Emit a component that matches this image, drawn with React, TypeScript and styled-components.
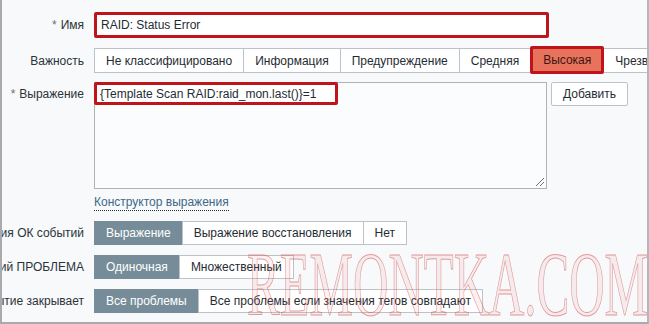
import styled, { createGlobalStyle } from "styled-components";

const GlobalStyle = createGlobalStyle`
  body {
    margin: 0;
    background: #ffffff;
    font-family: "Liberation Sans", Arial, sans-serif;
  }
`;

const Frame = styled.div`
  position: relative;
  width: 649px;
  height: 324px;
  box-sizing: border-box;
  border-left: 2px solid #a7abae;
  border-right: 2px solid #b3b7ba;
  border-bottom: 2px solid #a7abae;
  background: #f8f9fb;
  overflow: hidden;
  padding-top: 12px;
  font-size: 12px;
  color: #1f2c33;
`;

const Row = styled.div<{ $top?: number; $align?: string }>`
  display: flex;
  align-items: ${(p) => p.$align ?? "center"};
  margin-top: ${(p) => p.$top ?? 0}px;
`;

const Label = styled.div<{ $pad?: number }>`
  width: 82px;
  flex-shrink: 0;
  display: flex;
  justify-content: flex-end;
  white-space: nowrap;
  padding-top: ${(p) => p.$pad ?? 0}px;
  margin-right: 10px;
  color: #2b3338;
`;

const Star = styled.span`
  color: #6b6f72;
  margin-right: 4px;
`;

const NameInput = styled.div`
  width: 455px;
  height: 26px;
  box-sizing: border-box;
  border: 3px solid #bf141c;
  border-radius: 2px;
  background: #ffffff;
  padding: 0 4px;
  display: flex;
  align-items: center;
`;

const Group = styled.div`
  display: flex;
`;

const Seg = styled.div<{ $on?: boolean; $pad?: number }>`
  height: 24px;
  box-sizing: border-box;
  display: flex;
  align-items: center;
  padding: 0 ${(p) => p.$pad ?? 11}px;
  border: 1px solid ${(p) => (p.$on ? "#768d99" : "#bcc3c8")};
  margin-left: -1px;
  background: ${(p) => (p.$on ? "#768d99" : "#ffffff")};
  color: ${(p) => (p.$on ? "#ffffff" : "#1f2c33")};
  white-space: nowrap;
  &:first-child {
    margin-left: 0;
  }
`;

const Severity = styled(Seg)<{ $hot?: boolean }>`
  height: 25px;
  ${(p) =>
    p.$hot &&
    `
    background: #e8735c;
    color: #3b1510;
    border: 3px solid #bf141c;
    border-radius: 2px;
    height: 28px;
    margin: -2px 0 -1px -1px;
    position: relative;
  `}
`;

const ExprWrap = styled.div`
  display: flex;
  align-items: flex-start;
  gap: 4px;
`;

const TextArea = styled.div`
  position: relative;
  width: 453px;
  height: 107px;
  box-sizing: border-box;
  border: 1px solid #aeb3b7;
  background: #fbfcfd;
`;

const Highlight = styled.div`
  position: absolute;
  left: -1px;
  top: -1px;
  width: 244px;
  height: 23px;
  box-sizing: border-box;
  border: 3px solid #bf141c;
  border-radius: 2px;
  padding: 0 3px;
  display: flex;
  align-items: center;
  background: #ffffff;
  white-space: nowrap;
`;

const Grip = styled.svg`
  position: absolute;
  right: 1px;
  bottom: 1px;
`;

const Button = styled.div`
  height: 24px;
  box-sizing: border-box;
  border: 1px solid #bcc3c8;
  background: #ffffff;
  padding: 0 11px;
  display: flex;
  align-items: center;
  border-radius: 2px;
`;

const Link = styled.span`
  color: #3f6787;
  border-bottom: 1px dotted #1f2c33;
  padding-bottom: 1px;
`;

const Watermark = styled.div`
  position: absolute;
  left: 245px;
  top: 238px;
  font-family: "Liberation Serif", "Times New Roman", serif;
  font-size: 92px;
  line-height: 1;
  white-space: nowrap;
  color: rgba(230, 120, 120, 0.1);
  -webkit-text-stroke: 1px rgba(214, 92, 92, 0.6);
  transform: scaleX(0.532);
  transform-origin: left top;
  pointer-events: none;
`;

const severities = [
  "Не классифицировано",
  "Информация",
  "Предупреждение",
  "Средняя",
  "Высокая",
  "Чрезвычайная",
];

export default function App() {
  return (
    <>
      <GlobalStyle />
      <Frame>
        <Row>
          <Label>
            <Star>*</Star>Имя
          </Label>
          <NameInput>RAID: Status Error</NameInput>
        </Row>

        <Row $top={10}>
          <Label>Важность</Label>
          <Group>
            {severities.map((s) => (
              <Severity key={s} $hot={s === "Высокая"} $pad={s === "Высокая" ? 10 : 11}>
                {s}
              </Severity>
            ))}
          </Group>
        </Row>

        <Row $top={9} $align="flex-start">
          <Label $pad={5}>
            <Star>*</Star>Выражение
          </Label>
          <ExprWrap>
            <TextArea>
              <Highlight>{"{Template Scan RAID:raid_mon.last()}=1"}</Highlight>
              <Grip width="12" height="12" viewBox="0 0 12 12">
                <path d="M11 3 L3 11 M11 7 L7 11" stroke="#6a6f73" strokeWidth="1" />
              </Grip>
            </TextArea>
            <Button>Добавить</Button>
          </ExprWrap>
        </Row>

        <Row $top={6}>
          <Label />
          <Link>Конструктор выражения</Link>
        </Row>

        <Row $top={10}>
          <Label>Генерация ОК событий</Label>
          <Group>
            <Seg $on>Выражение</Seg>
            <Seg>Выражение восстановления</Seg>
            <Seg>Нет</Seg>
          </Group>
        </Row>

        <Row $top={10}>
          <Label>Режим генерации событий ПРОБЛЕМА</Label>
          <Group>
            <Seg $on>Одиночная</Seg>
            <Seg>Множественный</Seg>
          </Group>
        </Row>

        <Row $top={10}>
          <Label>ОК событие закрывает</Label>
          <Group>
            <Seg $on>Все проблемы</Seg>
            <Seg>Все проблемы если значения тегов совпадают</Seg>
          </Group>
        </Row>

        <Watermark>REMONTKA.COM</Watermark>
      </Frame>
    </>
  );
}
